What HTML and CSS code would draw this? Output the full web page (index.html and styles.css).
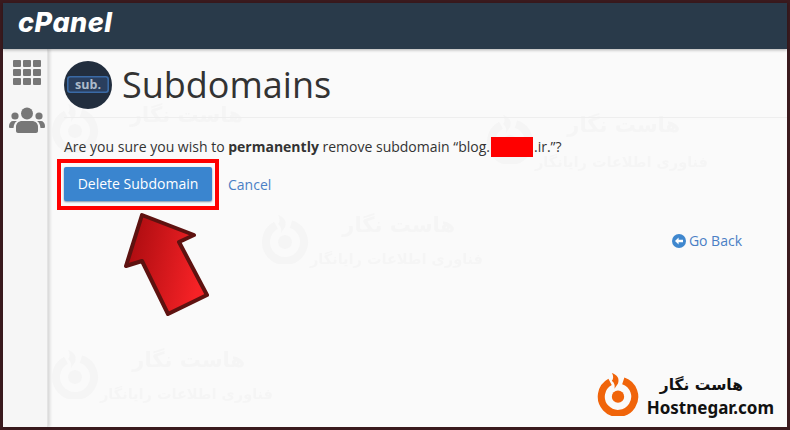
FILE: index.html
```html
<!DOCTYPE html>
<html lang="en">
<head>
<meta charset="utf-8">
<title>Subdomains</title>
<link rel="stylesheet" href="styles.css">
</head>
<body>
<div class="frame">
  <header class="topbar"><span class="logo">cPanel</span></header>
  <div class="main">
    <nav class="sidebar">
      <svg class="nav-grid" width="30" height="26" viewBox="0 0 30 26" fill="#777">
        <rect x="1" y="1" width="8" height="7" rx="1"/><rect x="11" y="1" width="8" height="7" rx="1"/><rect x="21" y="1" width="8" height="7" rx="1"/>
        <rect x="1" y="10" width="8" height="7" rx="1"/><rect x="11" y="10" width="8" height="7" rx="1"/><rect x="21" y="10" width="8" height="7" rx="1"/>
        <rect x="1" y="19" width="8" height="7" rx="1"/><rect x="11" y="19" width="8" height="7" rx="1"/><rect x="21" y="19" width="8" height="7" rx="1"/>
      </svg>
      <svg class="nav-users" width="36" height="26" viewBox="0 0 36 26" fill="#777">
        <circle cx="18" cy="6.500" r="6"/><circle cx="6" cy="9" r="3.600"/><circle cx="30" cy="9" r="3.600"/>
        <path d="M9 26c-1 0-2-1-2-2v-4c0-4 3-6 6-6h10c3 0 6 2 6 6v4c0 1-1 2-2 2z"/>
        <path d="M0 19c0-3 2-5 4-5h4c-2 1-3 3-3.500 7H1c-.6 0-1-.5-1-2zM36 19c0-3-2-5-4-5h-4c2 1 3 3 3.500 7H35c.6 0 1-.5 1-2z"/>
      </svg>
    </nav>
    <main class="content">
      <div class="mark mark-a"><svg class="mark-icon" viewBox="0 0 50 50"><use href="#ring"/></svg><div class="mark-text"><b>هاست نگار</b></div></div>
      <div class="mark mark-b"><svg class="mark-icon" viewBox="0 0 50 50"><use href="#ring"/></svg><div class="mark-text"><b>هاست نگار</b><span>فناوری اطلاعات رایانگار</span></div></div>
      <div class="mark mark-c"><svg class="mark-icon" viewBox="0 0 50 50"><use href="#ring"/></svg><div class="mark-text"><b>هاست نگار</b><span>فناوری اطلاعات رایانگار</span></div></div>
      <div class="mark mark-d"><svg class="mark-icon" viewBox="0 0 50 50"><use href="#ring"/></svg><div class="mark-text"><b>هاست نگار</b><span>فناوری اطلاعات رایانگار</span></div></div>

      <div class="title-row">
        <svg class="sub-icon" width="48" height="48" viewBox="0 0 48 48">
          <circle cx="24" cy="24" r="24" fill="#222e3e"/>
          <rect x="3.800" y="15.800" width="40.400" height="15.400" rx="2.500" fill="#2a3f5e" stroke="#3a6aa5" stroke-width="1.600"/>
          <text x="24" y="28.300" text-anchor="middle" class="sub-text">sub.</text>
        </svg>
        <h1>Subdomains</h1>
      </div>
      <p class="question">Are you sure you wish to <strong>permanently</strong> remove subdomain “blog.<span class="redact"></span>.ir.”?</p>
      <div class="actions">
        <a class="btn">Delete Subdomain</a>
        <a class="cancel">Cancel</a>
      </div>
      <div class="back-row">
        <a class="back">
          <svg width="14" height="14" viewBox="0 0 14 14"><circle cx="7" cy="7" r="7" fill="#3f87ce"/><path d="M3 7l3.600-3.400v2.100H11v2.600H6.600v2.100z" fill="#fff"/></svg>
          Go Back
        </a>
      </div>
      <div class="brand">
        <svg class="brand-icon" width="44" height="46" viewBox="0 0 50 50"><use href="#ring"/></svg>
        <div class="brand-text"><b>هاست نگار</b><span>Hostnegar.com</span></div>
      </div>
    </main>
  </div>
  <div class="highlight"></div>
  <svg class="arrow" width="100" height="120" viewBox="0 0 100 120">
    <defs>
      <linearGradient id="red" x1="0" y1="0" x2="1" y2="0.250"><stop offset="0" stop-color="#a40a0e"/><stop offset="1" stop-color="#f62226"/></linearGradient>
    </defs>
    <path d="M24 8L8 59l16-5 26 53 39-19-28-53 15-7z" fill="url(#red)" stroke="#5e1210" stroke-width="4" stroke-linejoin="round"/>
  </svg>
</div>
<svg class="defs" width="0" height="0">
  <symbol id="ring" viewBox="0 0 50 50">
    <path d="M31 10A19 19 0 1 1 16 11.300" fill="none" stroke="currentColor" stroke-width="8"/>
    <circle cx="25" cy="28" r="7" fill="currentColor"/>
    <path d="M18 1c6 2 9 6 7 12l-4 6c1-5-1-7-3-9 2-2 2-6 0-9z" fill="currentColor"/>
  </symbol>
</svg>
</body>
</html>
```
FILE: styles.css
```css
* { box-sizing: border-box; }
html, body { margin: 0; height: 100%; }
body { font-family: "Open Sans", sans-serif; overflow: hidden; }
.frame {
  position: relative;
  width: 790px;
  height: 430px;
  border: 3px solid #3a1a1e;
  display: flex;
  flex-direction: column;
  background: #fafafa;
}
.topbar {
  height: 46px;
  flex: none;
  background: #293a4a;
  padding-left: 15px;
  box-shadow: 0 1px 3px rgba(0,0,0,.3);
  z-index: 1;
}
.logo {
  font-family: Inter, sans-serif;
  font-weight: 800;
  font-style: italic;
  font-size: 27px;
  letter-spacing: .5px;
  line-height: 40px;
  color: #fff;
}
.main { flex: 1; display: flex; min-height: 0; }
.sidebar {
  width: 45px;
  flex: none;
  background: #f6f6f6;
  border-right: 1px solid #e4e4e4;
  box-shadow: 2px 0 3px rgba(0,0,0,.14);
  display: flex;
  flex-direction: column;
  align-items: center;
  padding: 10px 0 0 3px;
  gap: 22px;
}
.content {
  position: relative;
  flex: 1;
  padding: 12px 0 0 16px;
  overflow: hidden;
}
.title-row {
  position: relative;
  display: flex;
  align-items: center;
  gap: 10px;
  height: 57px;
  padding-bottom: 8px;
  border-bottom: 1px solid #eee;
}
.sub-text { font: 700 12.500px "Open Sans", sans-serif; fill: #aebccb; }
h1 {
  margin: 0;
  font-weight: 400;
  font-size: 36px;
  line-height: 40px;
  color: #333;
}
.question {
  position: relative;
  margin: 19px 0 0;
  height: 20px;
  font-size: 14px;
  line-height: 20px;
  color: #333;
}
.question strong { font-weight: 700; }
.redact {
  display: inline-block;
  width: 42px;
  height: 20px;
  margin: 0 1px;
  background: #f00;
  vertical-align: -5px;
}
.actions { position: relative; display: flex; align-items: center; gap: 16px; margin-top: 10px; }
.btn {
  display: block;
  width: 148px;
  height: 34px;
  line-height: 34px;
  text-align: center;
  font-size: 14px;
  color: #fff;
  background: #3a85cf;
  border-radius: 2px;
  box-shadow: 0 1px 2px rgba(0,40,90,.5);
}
.cancel { font-size: 14px; color: #4a7fc5; }
.back-row { position: relative; display: flex; justify-content: flex-end; margin: 30px 45px 0 0; }
.back { display: flex; align-items: center; gap: 3px; font-size: 14px; color: #4a7fc5; }
.mark { position: absolute; display: flex; align-items: flex-start; color: #f5f5f5; filter: blur(.5px); }
.mark-icon { width: 50px; height: 50px; flex: none; margin-top: 5px; }
.mark-text {
  display: flex;
  flex-direction: column;
  align-items: flex-start;
  font-family: "DejaVu Sans", sans-serif;
  direction: rtl;
}
.mark-text b { font-size: 21px; line-height: 33px; margin-right: 28px; white-space: nowrap; }
.mark-text span { font-size: 14.500px; font-weight: 700; line-height: 10px; margin-top: 11.500px; white-space: nowrap; }
.mark-a { left: 2px; top: 54px; }
.mark-a .mark-text { margin: 2px 0 0 30px; }
.mark-a .mark-text b { margin-right: 0; line-height: 20px; }
.mark-a .mark-icon { margin-top: 0; }
.mark-b { left: 437px; top: 60px; }
.mark-b .mark-text span { margin-top: 15px; }
.mark-c { left: 212px; top: 160px; }
.mark-d { left: 2px; top: 295px; }
.brand { position: absolute; right: 13px; bottom: 7px; display: flex; align-items: center; gap: 7px; }
.brand-icon { color: #f0640a; align-self: flex-start; margin-top: -3px; }
.brand-text { display: flex; flex-direction: column; align-items: center; color: #111; font-weight: 700; }
.brand-text b { font-family: "DejaVu Sans", sans-serif; font-size: 15.500px; line-height: 22px; direction: rtl; margin-right: 18px; }
.brand-text span { font-family: "Noto Sans", sans-serif; font-size: 17px; line-height: 24px; }
.highlight {
  position: absolute;
  left: 54px;
  top: 156px;
  width: 162px;
  height: 51px;
  border: 4px solid #f00;
}
.arrow { position: absolute; left: 115px; top: 204px; }
.defs { position: absolute; }
```
